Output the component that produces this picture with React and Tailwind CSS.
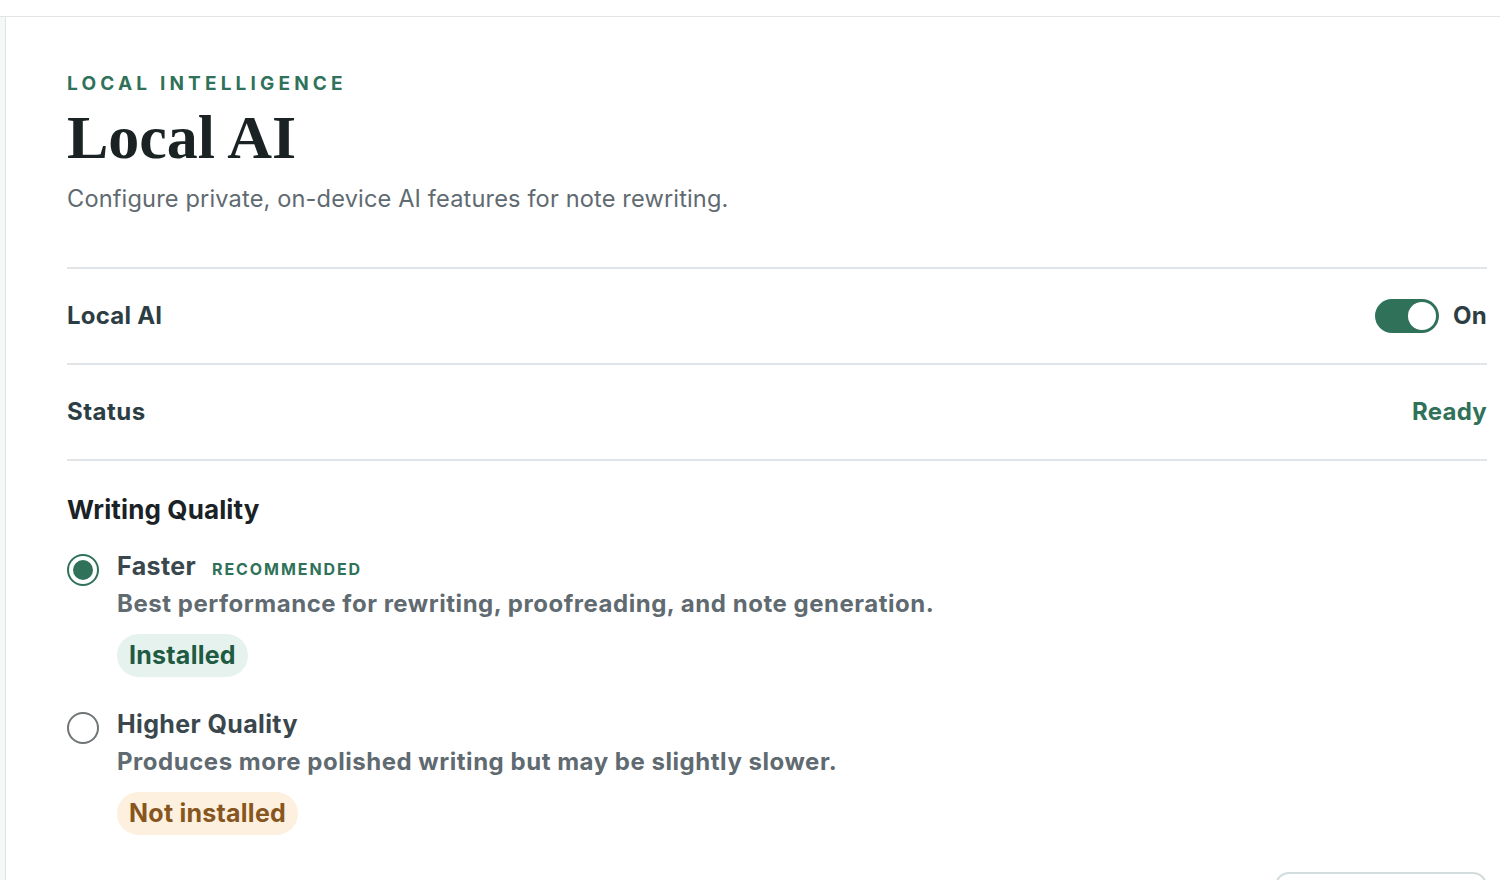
import { useState } from "react";

const sans = "font-['Inter','Noto_Sans',sans-serif]";

function Badge({ tone, children }) {
  const cls =
    tone === "green"
      ? "bg-[#e6f2ed] text-[#1f5a43]"
      : "bg-[#fdf0df] text-[#87561f]";
  return (
    <span className={`inline-flex h-[43px] items-center rounded-full px-[12px] text-[25px] font-bold tracking-[0.01em] ${cls}`}>
      {children}
    </span>
  );
}

function Radio({ checked }) {
  return (
    <span
      className={`mt-[3px] flex h-[32px] w-[32px] shrink-0 items-center justify-center rounded-full border-2 ${
        checked ? "border-[#2f7259]" : "border-[#6f7477]"
      }`}
    >
      {checked && <span className="h-[20px] w-[20px] rounded-full bg-[#2f7259]" />}
    </span>
  );
}

function Option({ checked, title, tag, desc, badge, onPick }) {
  return (
    <div className="flex gap-[18px]" onClick={onPick}>
      <Radio checked={checked} />
      <div className="flex flex-col">
        <div className="flex h-[32px] items-center gap-[16px]">
          <span className="text-[25px] font-bold tracking-[0.015em] text-[#3a474d]">{title}</span>
          {tag && (
            <span className="mt-[3px] text-[16px] font-bold tracking-[0.12em] text-[#2f7259]">
              {tag}
            </span>
          )}
        </div>
        <p className="mt-[6px] text-[24px] font-bold leading-[30px] tracking-[0.022em] text-[#5f6a71]">{desc}</p>
        <div className="mt-[15px]">{badge}</div>
      </div>
    </div>
  );
}

export default function App() {
  const [on, setOn] = useState(true);
  const [quality, setQuality] = useState("faster");

  return (
    <div className={`h-[880px] w-[1500px] overflow-hidden bg-white ${sans}`}>
      <div className="h-[17px] border-b border-[#e1e5e7]" />
      <div className="flex h-[863px]">
        <div className="w-[6px] shrink-0 border-r border-[#e1e5e7] bg-[#f6f7f7]" />
        <div className="flex-1 pl-[61px] pr-[13px]">
          <div className="pt-[57px]">
            <div className="text-[19px] font-bold leading-[20px] tracking-[0.22em] text-[#2f7259]">
              LOCAL INTELLIGENCE
            </div>
            <h1 className="mt-[12px] font-['Liberation_Serif',serif] text-[62px] font-bold leading-[62px] text-[#1a2224]">
              Local AI
            </h1>
            <p className="mt-[16px] text-[23.6px] leading-[30px] tracking-[0.006em] text-[#5f6a71]">
              Configure private, on-device AI features for note rewriting.
            </p>
          </div>

          <div className="mt-[53px] border-t-2 border-[#e1e5e7]">
            <div className="flex h-[96px] items-center justify-between border-b-2 border-[#e1e5e7]">
              <span className="text-[24px] font-bold tracking-[0.01em] text-[#2c3e44]">Local AI</span>
              <button onClick={() => setOn(!on)} className="flex items-center gap-[14px]">
                <span
                  className={`flex h-[34px] w-[64px] items-center rounded-full p-[3px] ${
                    on ? "justify-end bg-[#2f7259]" : "justify-start bg-[#c9cfd2]"
                  }`}
                >
                  <span className="h-[28px] w-[28px] rounded-full bg-white" />
                </span>
                <span className="text-[24px] font-bold tracking-[0.01em] text-[#2c3e44]">{on ? "On" : "Off"}</span>
              </button>
            </div>
            <div className="flex h-[96px] items-center justify-between border-b-2 border-[#e1e5e7]">
              <span className="text-[24px] font-bold tracking-[0.02em] text-[#2c3e44]">Status</span>
              <span className="text-[24px] font-bold tracking-[0.01em] text-[#2f7259]">Ready</span>
            </div>
          </div>

          <h2 className="mt-[33px] text-[26px] font-bold leading-[32px] tracking-[0.005em] text-[#1b2226]">Writing Quality</h2>

          <div className="mt-[25px] flex flex-col gap-[32px]">
            <Option
              checked={quality === "faster"}
              onPick={() => setQuality("faster")}
              title="Faster"
              tag="RECOMMENDED"
              desc="Best performance for rewriting, proofreading, and note generation."
              badge={<Badge tone="green">Installed</Badge>}
            />
            <Option
              checked={quality === "higher"}
              onPick={() => setQuality("higher")}
              title="Higher Quality"
              desc="Produces more polished writing but may be slightly slower."
              badge={<Badge tone="amber">Not installed</Badge>}
            />
          </div>

          <div className="mt-[37px] flex justify-end">
            <div className="h-[40px] w-[212px] rounded-[14px] border-2 border-[#d3dcdc]" />
          </div>
        </div>
      </div>
    </div>
  );
}
